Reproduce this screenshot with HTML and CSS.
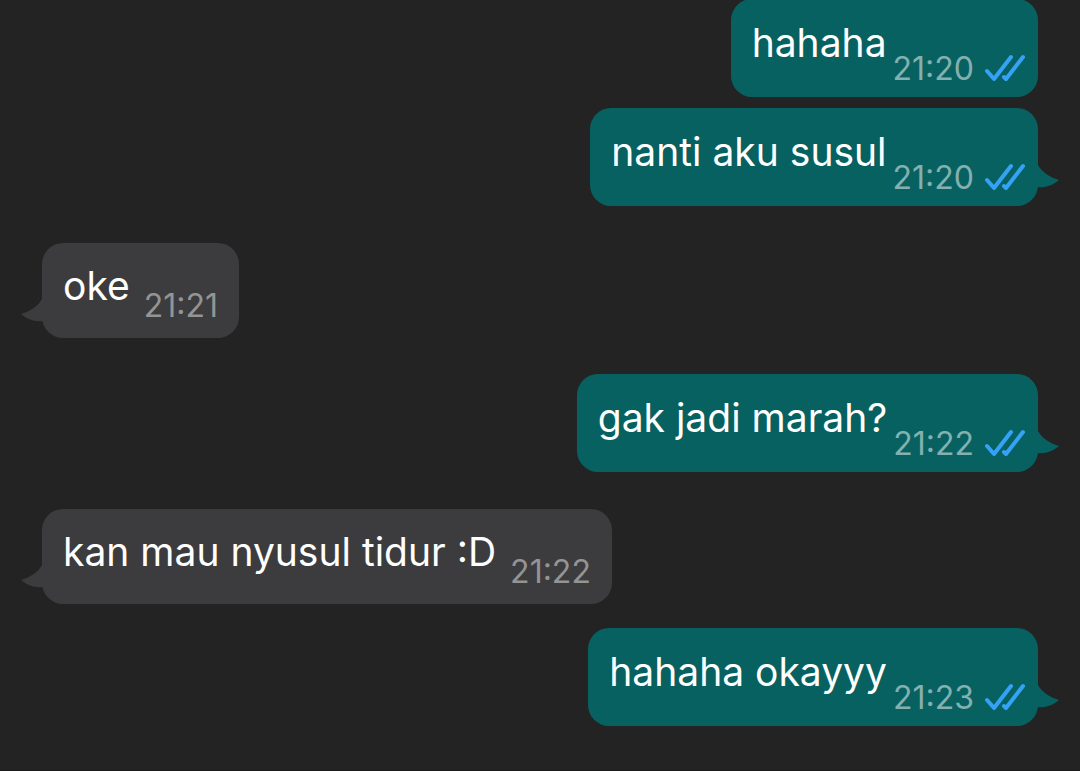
FILE: index.html
```html
<!DOCTYPE html>
<html lang="id">
<head>
  <meta charset="UTF-8">
  <meta name="viewport" content="width=device-width, initial-scale=1.0">
  <title>Chat</title>
  <link rel="stylesheet" href="styles.css">
</head>
<body>
  <!-- Shared shapes -->
  <svg class="defs" aria-hidden="true">
    <symbol id="ticks" viewBox="0 0 42 28">
      <path d="M3 17 L10 25 L27 3 M20 23 L22 25 L39 3" fill="none" stroke="currentColor" stroke-width="4" stroke-linecap="round" stroke-linejoin="round"/>
    </symbol>
    <symbol id="tail" viewBox="0 0 24 24">
      <path d="M0 0 H3 C7 7 14 12 24 15 C18 20 11 23 3 22 L0 24 Z" fill="currentColor"/>
    </symbol>
  </svg>

  <main class="chat">
    <div class="message sent">
      <p class="text">hahaha</p>
      <time class="time">21:20</time>
      <svg class="ticks"><use href="#ticks"/></svg>
    </div>

    <div class="message sent grouped">
      <p class="text">nanti aku susul</p>
      <time class="time">21:20</time>
      <svg class="ticks"><use href="#ticks"/></svg>
      <svg class="tail"><use href="#tail"/></svg>
    </div>

    <div class="message received">
      <p class="text">oke</p>
      <time class="time">21:21</time>
      <svg class="tail"><use href="#tail"/></svg>
    </div>

    <div class="message sent">
      <p class="text">gak jadi marah?</p>
      <time class="time">21:22</time>
      <svg class="ticks"><use href="#ticks"/></svg>
      <svg class="tail"><use href="#tail"/></svg>
    </div>

    <div class="message received">
      <p class="text">kan mau nyusul tidur :D</p>
      <time class="time">21:22</time>
      <svg class="tail"><use href="#tail"/></svg>
    </div>

    <div class="message sent last">
      <p class="text">hahaha okayyy</p>
      <time class="time">21:23</time>
      <svg class="ticks"><use href="#ticks"/></svg>
      <svg class="tail"><use href="#tail"/></svg>
    </div>
  </main>
</body>
</html>
```
FILE: styles.css
```css
* {
  box-sizing: border-box;
}

body {
  margin: 0;
  background-color: #232323;
  color: #fff;
  font-family: Inter, 'Liberation Sans', sans-serif;
}

.defs {
  display: none;
}

/* The list stays scrolled to the newest message */
.chat {
  display: flex;
  flex-direction: column;
  justify-content: flex-end;
  height: 100vh;
  padding: 0 42px 44px;
  border-bottom: 1px solid #1c191b;
  overflow: hidden;
}

.message {
  position: relative;
  display: flex;
  align-items: flex-end;
  max-width: 85%;
  margin-top: 36px;
  border-radius: 21px;
}

.message.received {
  margin-top: 37px;
}

.message.grouped {
  margin-top: 11px;
}

.message.last {
  margin-top: 24px;
}

.text {
  margin: 0;
  font-size: 39px;
  line-height: 50px;
}

.time {
  font-size: 32px;
  line-height: 40px;
}

.ticks {
  width: 42px;
  height: 28px;
  margin-left: 10px;
  margin-bottom: 3px;
  color: #35a2f5;
}

.tail {
  position: absolute;
  right: -21px;
  bottom: 17px;
  width: 24px;
  height: 24px;
}

/* Sent */
.sent {
  align-self: flex-end;
  padding: 19px 12px 12px 21px;
  background-color: #086161;
}

.sent .text {
  margin-bottom: 17px;
}

.sent .time {
  margin-left: 6px;
  margin-bottom: -4px;
  color: #83b0b0;
}

.sent .tail {
  color: #086161;
}

/* Received */
.received {
  align-self: flex-start;
  padding: 18px 21px 12px;
  background-color: #3c3c3e;
}

.received .text {
  margin-bottom: 15px;
}

.received .time {
  margin-left: 14px;
  color: #949495;
}

.received .tail {
  right: auto;
  left: -21px;
  bottom: 15px;
  color: #3c3c3e;
  transform: scaleX(-1);
}
```
